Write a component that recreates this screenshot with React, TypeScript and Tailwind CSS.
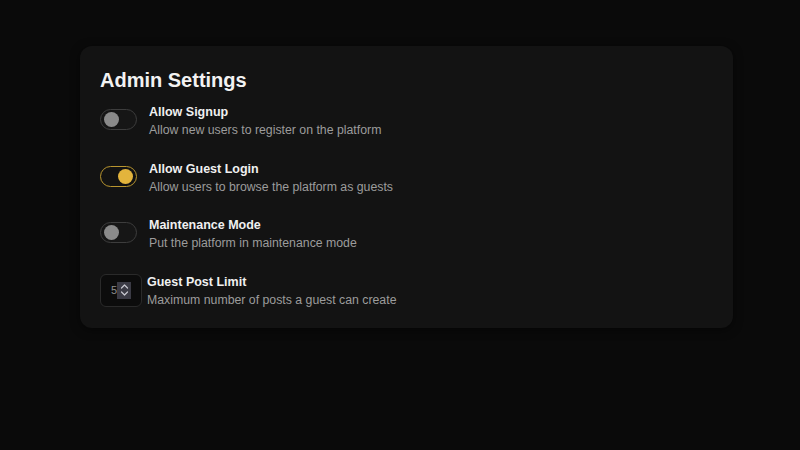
import { useState } from 'react';

type ToggleProps = { on: boolean; onChange: () => void };

function Toggle({ on, onChange }: ToggleProps) {
    return (
        <button
            onClick={onChange}
            className={`mt-[6px] w-[37px] h-[21px] shrink-0 rounded-full border flex items-center px-[3px] ${on ? 'border-[#b8952f] bg-[#121212] justify-end' : 'border-[#3d3d3d] bg-[#161616] justify-start'}`}
        >
            <span className={`w-[15px] h-[15px] rounded-full ${on ? 'bg-[#e3b43c]' : 'bg-[#8a8a8a]'}`}></span>
        </button>
    );
}

export default function App() {
    const [settings, setSettings] = useState({ signup: false, guest: true, maintenance: false });

    const rows = [
        { key: 'signup' as const, label: 'Allow Signup', desc: 'Allow new users to register on the platform' },
        { key: 'guest' as const, label: 'Allow Guest Login', desc: 'Allow users to browse the platform as guests' },
        { key: 'maintenance' as const, label: 'Maintenance Mode', desc: 'Put the platform in maintenance mode' },
    ];

    return (
        <div className="w-[800px] h-[450px] bg-[#0a0a0a] pt-[46px] pl-[80px] font-['Liberation_Sans',Arial,sans-serif]">
            <div className="w-[653px] rounded-xl bg-[#131313] shadow-[0_2px_10px_rgba(0,0,0,0.5)] px-5 pt-5 pb-[19px]">
                <h1 className="text-[20px] leading-[28px] font-bold text-[#f2f2f2]">Admin Settings</h1>

                <div className="mt-[9px] flex flex-col gap-[20.5px]">
                    {rows.map((r) => (
                        <div key={r.key} className="flex items-start">
                            <Toggle
                                on={settings[r.key]}
                                onChange={() => setSettings({ ...settings, [r.key]: !settings[r.key] })}
                            />
                            <div className="ml-[12px] flex flex-col">
                                <span className="text-[12.5px] leading-[18px] font-semibold text-[#f0f0f0]">{r.label}</span>
                                <span className="text-[12.3px] leading-[18px] text-[#9c9c9c]">{r.desc}</span>
                            </div>
                        </div>
                    ))}

                    <div className="flex items-start">
                        <div className="w-[42px] h-[33px] shrink-0 rounded-md border border-[#2a2a2a] bg-[#0c0c0c] flex items-center justify-center mt-px">
                            <span className="text-[11px] leading-none text-[#8f8f8f]">5</span>
                            <span className="w-[14px] h-[17px] bg-[#3b3b45] flex flex-col items-center justify-center">
                                <svg width="9" height="14" viewBox="0 0 9 14" fill="none" stroke="#c8c8d0" strokeWidth="1.2" strokeLinecap="round" strokeLinejoin="round">
                                    <path d="M1.5 5 L4.5 2 L7.5 5" />
                                    <path d="M1.5 9 L4.5 12 L7.5 9" />
                                </svg>
                            </span>
                        </div>
                        <div className="ml-[5px] flex flex-col">
                            <span className="text-[12.5px] leading-[18px] font-semibold text-[#f0f0f0]">Guest Post Limit</span>
                            <span className="text-[12.3px] leading-[18px] text-[#9c9c9c]">Maximum number of posts a guest can create</span>
                        </div>
                    </div>
                </div>
            </div>
        </div>
    );
}
